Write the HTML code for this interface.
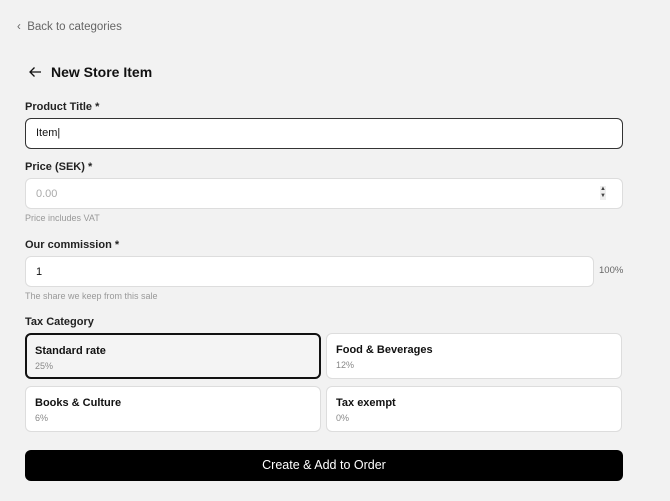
<!DOCTYPE html>
<html><head><meta charset="utf-8"><style>
*{box-sizing:border-box;margin:0;padding:0}
body{width:670px;height:501px;background:#f2f2f2;font-family:"Liberation Sans",sans-serif;color:#111;position:relative;overflow:hidden}
.a{position:absolute}
.lbl{font-size:11px;font-weight:bold;color:#222}
.inp{background:#fff;border:1px solid #ddd;border-radius:6px;height:31px}
.help{font-size:9px;color:#999}
.card{background:#fff;border:1px solid #ddd;border-radius:6px;width:296px;height:46px}
.card b{position:absolute;left:9px;top:10px;font-size:11px;color:#111}
.card span{position:absolute;left:9px;top:26px;font-size:9px;color:#888}
</style></head><body>
<div class="a" style="left:17px;top:21px;font-size:11.5px;color:#666">‹&nbsp;&nbsp;Back to categories</div>
<svg class="a" style="left:28px;top:66px" width="14" height="12" viewBox="0 0 14 12"><path d="M13 6H2M6.5 1.5L2 6l4.5 4.5" stroke="#111" stroke-width="1.3" fill="none"/></svg>
<div class="a" style="left:51px;top:64px;font-size:14px;font-weight:bold">New Store Item</div>
<div class="a lbl" style="left:25px;top:101px">Product Title *</div>
<div class="a inp" style="left:25px;top:118px;width:598px;border:1.3px solid #333"><span class="a" style="left:10px;top:8px;font-size:11px">Item|</span></div>
<div class="a lbl" style="left:25px;top:161px">Price (SEK) *</div>
<div class="a inp" style="left:25px;top:178px;width:598px"><span class="a" style="left:10px;top:9px;font-size:11px;color:#aaa">0.00</span><span class="a" style="left:574px;top:7px;font-size:6px;line-height:7px;color:#444;background:#eee">▲<br>▼</span></div>
<div class="a help" style="left:25px;top:213px">Price includes VAT</div>
<div class="a lbl" style="left:25px;top:239px">Our commission *</div>
<div class="a inp" style="left:25px;top:256px;width:569px"><span class="a" style="left:10px;top:9px;font-size:11px">1</span></div>
<div class="a" style="left:599px;top:265px;font-size:9.5px;color:#666">100%</div>
<div class="a help" style="left:25px;top:291px">The share we keep from this sale</div>
<div class="a lbl" style="left:25px;top:316px">Tax Category</div>
<div class="a card" style="left:25px;top:333px;background:#f4f4f4;border:2px solid #111"><b style="left:8px;top:10px">Standard rate</b><span style="left:8px">25%</span></div>
<div class="a card" style="left:326px;top:333px"><b>Food &amp; Beverages</b><span>12%</span></div>
<div class="a card" style="left:25px;top:386px"><b>Books &amp; Culture</b><span>6%</span></div>
<div class="a card" style="left:326px;top:386px"><b>Tax exempt</b><span>0%</span></div>
<div class="a" style="left:25px;top:450px;width:598px;height:31px;background:#000;border-radius:6px;color:#fff;font-size:12.5px;text-align:center;line-height:31px">Create &amp; Add to Order</div>
</body></html>
